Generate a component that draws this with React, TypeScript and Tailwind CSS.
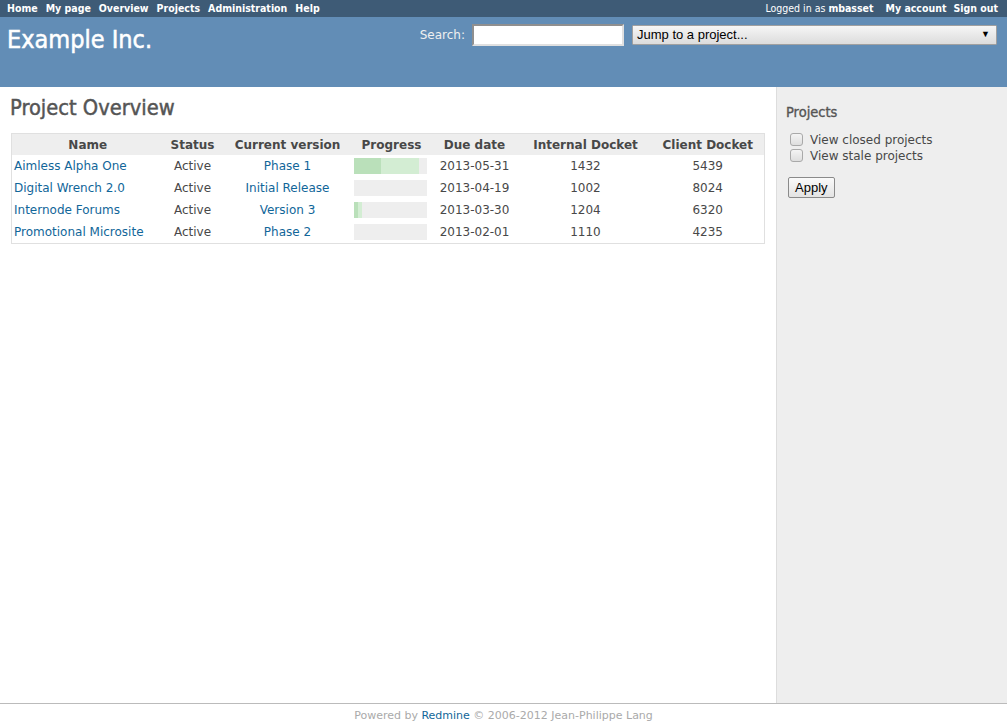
import React from "react";

const rows = [
  { name: "Aimless Alpha One", status: "Active", version: "Phase 1", closed: 27, done: 38, due: "2013-05-31", internal: "1432", client: "5439" },
  { name: "Digital Wrench 2.0", status: "Active", version: "Initial Release", closed: 0, done: 0, due: "2013-04-19", internal: "1002", client: "8024" },
  { name: "Internode Forums", status: "Active", version: "Version 3", closed: 4, done: 4, due: "2013-03-30", internal: "1204", client: "6320" },
  { name: "Promotional Microsite", status: "Active", version: "Phase 2", closed: 0, done: 0, due: "2013-02-01", internal: "1110", client: "4235" },
];

function Checkbox() {
  return (
    <span className="inline-block w-[13px] h-[13px] rounded-[3px] border border-[#a9a9a9] bg-gradient-to-b from-[#f4f4f4] to-[#dedede] mr-[7px] shrink-0" />
  );
}

const condensed = { fontFamily: '"DejaVu Sans Condensed", "DejaVu Sans", sans-serif' };

export default function App() {
  return (
    <div className="w-[1007px] h-[727px] flex flex-col bg-white text-[#484848] text-[12px] overflow-hidden" style={{ fontFamily: '"DejaVu Sans", Verdana, sans-serif' }}>
      {/* Top menu */}
      <div className="h-[17px] bg-[#3E5B76] text-white font-bold text-[10.5px] flex items-center justify-between pl-[7px] pr-[9px]" style={condensed}>
        <div className="flex gap-[8px]">
          <span>Home</span>
          <span>My page</span>
          <span>Overview</span>
          <span>Projects</span>
          <span>Administration</span>
          <span>Help</span>
        </div>
        <div className="flex items-center">
          <span className="font-normal">Logged in as <span className="font-bold">mbasset</span></span>
          <span className="ml-[12px]">My account</span>
          <span className="ml-[7px]">Sign out</span>
        </div>
      </div>

      {/* Header */}
      <div className="h-[70px] bg-[#628DB6] flex justify-between items-start pl-[7px] pr-[10px]">
        <h1 className="text-white text-[25px] leading-none mt-[10px] font-normal [-webkit-text-stroke:0.5px_white]" style={condensed}>Example Inc.</h1>
        <div className="flex items-center mt-[7px]">
          <span className="text-[#f0f0f0] text-[12px] mr-[7px]">Search:</span>
          <div className="w-[152px] h-[22px] bg-white border-2 border-t-[#8f8f8f] border-l-[#8f8f8f] border-r-[#e0e0e0] border-b-[#e0e0e0]" />
          <div className="ml-[8px] w-[365px] h-[20px] border border-[#a0a0a0] rounded-[1px] bg-gradient-to-b from-[#f6f6f6] to-[#dcdcdc] flex items-center justify-between pl-[4px] pr-[6px] text-black text-[13px]" style={{ fontFamily: '"Liberation Sans", Arial, sans-serif' }}>
            <span>Jump to a project...</span>
            <span className="text-[9px]">▼</span>
          </div>
        </div>
      </div>

      {/* Main */}
      <div className="flex flex-1">
        <div className="flex-1 pl-[10px] pr-[11px] pt-[10px]">
          <h2 className="text-[21.7px] text-[#555] leading-none mb-[14px] font-normal [-webkit-text-stroke:0.45px_#555]" style={condensed}>Project Overview</h2>
          <table className="table-fixed border-collapse border border-[#e0e0e0] w-[753px] ml-[1px]">
            <colgroup>
              <col className="w-[152px]" />
              <col className="w-[58px]" />
              <col className="w-[132px]" />
              <col className="w-[76px]" />
              <col className="w-[90px]" />
              <col className="w-[132px]" />
              <col className="w-[113px]" />
            </colgroup>
            <thead>
              <tr className="bg-[#eeeeee] h-[22px] font-bold text-center">
                <th className="p-0 pt-[1px]">Name</th>
                <th className="p-0 pt-[1px]">Status</th>
                <th className="p-0 pt-[1px]">Current version</th>
                <th className="p-0 pt-[1px]">Progress</th>
                <th className="p-0 pt-[1px]">Due date</th>
                <th className="p-0 pt-[1px]">Internal Docket</th>
                <th className="p-0 pt-[1px]">Client Docket</th>
              </tr>
            </thead>
            <tbody>
              {rows.map((r) => (
                <tr key={r.name} className="h-[22px]">
                  <td className="text-left pl-[2px] text-[#169] p-0 h-[22px]">{r.name}</td>
                  <td className="text-center p-0">{r.status}</td>
                  <td className="text-center text-[#169] p-0">{r.version}</td>
                  <td className="p-0">
                    <div className="flex w-[73px] h-[16px] bg-[#eeeeee]">
                      <div className="bg-[#BAE0BA] h-full" style={{ width: r.closed }} />
                      <div className="bg-[#D3EDD3] h-full" style={{ width: r.done }} />
                    </div>
                  </td>
                  <td className="text-center p-0">{r.due}</td>
                  <td className="text-center p-0">{r.internal}</td>
                  <td className="text-center p-0">{r.client}</td>
                </tr>
              ))}
            </tbody>
          </table>
        </div>
        <div className="w-[232px] bg-[#eeeeee] border-l border-[#dddddd] pl-[9px] pt-[18px]">
          <h3 className="text-[14.5px] font-normal text-[#555] leading-none mb-[12px] [-webkit-text-stroke:0.35px_#555]" style={condensed}>Projects</h3>
          <div className="flex items-center h-[16px] pl-[4px]"><Checkbox /><span>View closed projects</span></div>
          <div className="flex items-center h-[16px] pl-[4px]"><Checkbox /><span>View stale projects</span></div>
          <div className="mt-[13px] ml-[2px] inline-block px-[6px] h-[21px] leading-[19px] border border-[#8a8a8a] rounded-[2px] bg-gradient-to-b from-[#fafafa] to-[#e3e3e3] text-black text-[13px]" style={{ fontFamily: '"Liberation Sans", Arial, sans-serif' }}>Apply</div>
        </div>
      </div>

      {/* Footer */}
      <div className="h-[24px] border-t border-[#bbbbbb] flex items-center justify-center text-[#aaaaaa] text-[11px] pt-[1px]">
        <span>Powered by <span className="text-[#169]">Redmine</span> © 2006-2012 Jean-Philippe Lang</span>
      </div>
    </div>
  );
}
